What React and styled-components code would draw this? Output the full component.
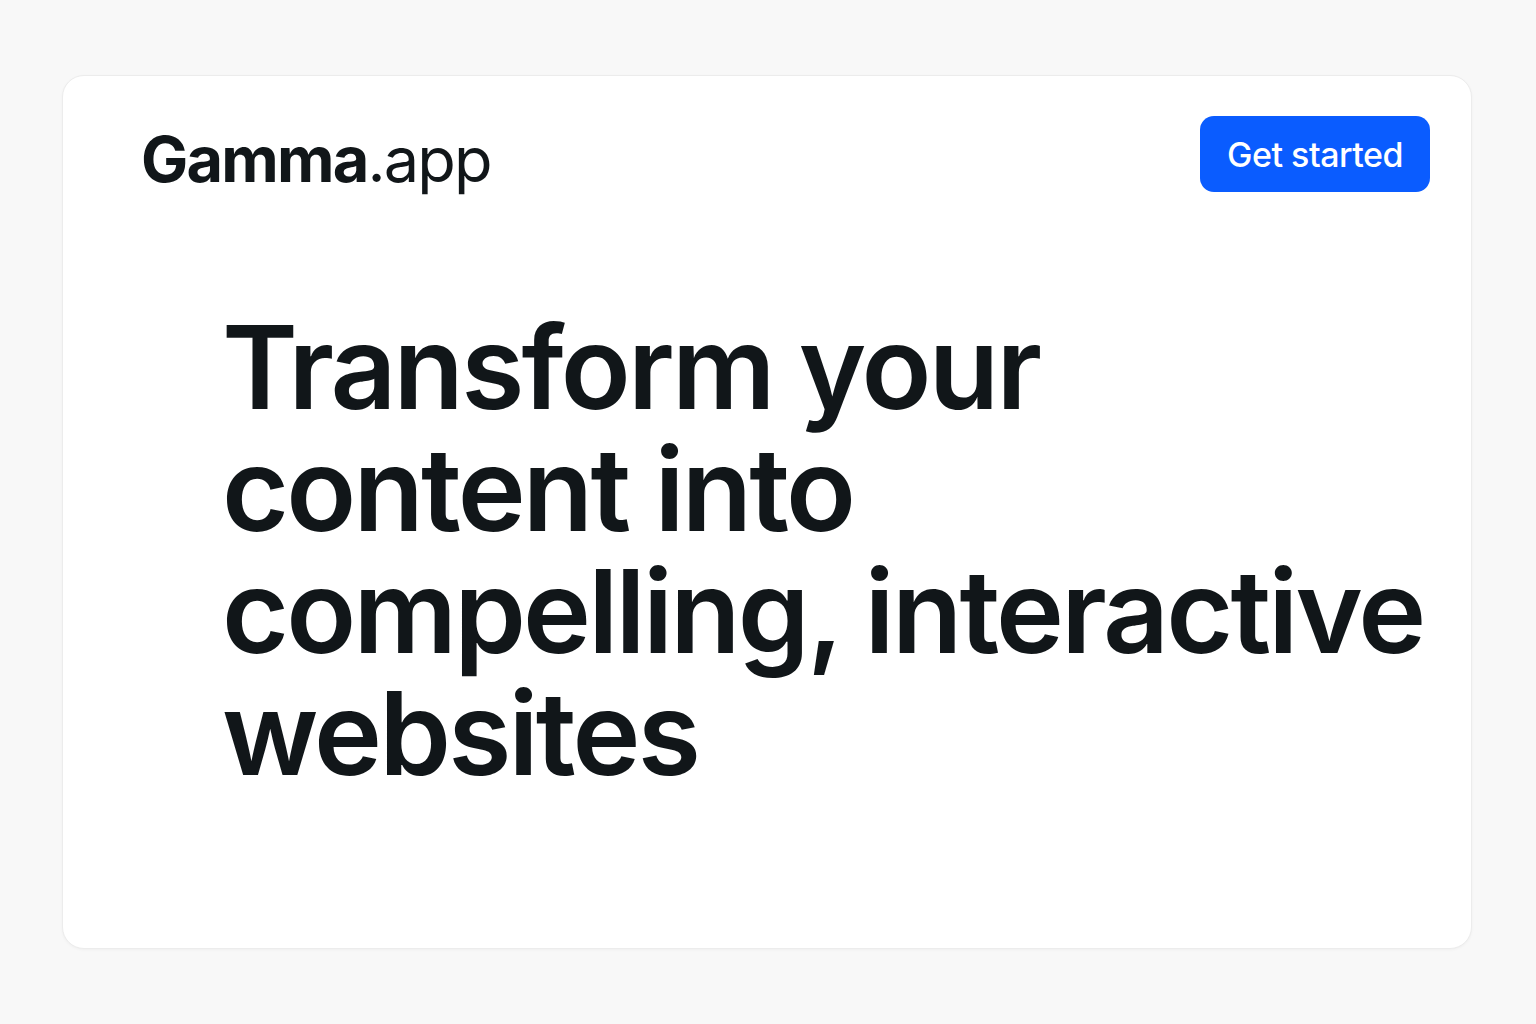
import React from "react";
import styled, { createGlobalStyle } from "styled-components";

const GlobalStyle = createGlobalStyle`
  html, body {
    margin: 0;
    padding: 0;
    background: #f8f8f8;
    font-family: Inter, "Noto Sans", "Liberation Sans", sans-serif;
    color: #111619;
  }
`;

const Page = styled.div`
  width: 1536px;
  height: 1024px;
  padding: 75px 64px 0 62px;
  box-sizing: border-box;
`;

const Card = styled.div`
  width: 1410px;
  height: 874px;
  box-sizing: border-box;
  background: #ffffff;
  border: 1px solid #ececec;
  border-radius: 22px;
  box-shadow: 0 1px 3px rgba(0, 0, 0, 0.04);
  padding: 40px 41px 0 78px;
`;

const Header = styled.header`
  display: flex;
  align-items: center;
  justify-content: space-between;
`;

const Logo = styled.div`
  font-size: 63px;
  letter-spacing: -1.8px;
  line-height: 1;
  padding-top: 10px;
`;

const LogoStrong = styled.span`
  font-weight: 700;
`;

const LogoLight = styled.span`
  font-weight: 400;
`;

const StartButton = styled.button`
  width: 230px;
  height: 76px;
  border: none;
  border-radius: 14px;
  background: #0a5cff;
  color: #ffffff;
  font-family: inherit;
  font-size: 34px;
  font-weight: 500;
  letter-spacing: -0.5px;
`;

const Hero = styled.h1`
  margin: 115px 0 0 81px;
  font-size: 115px;
  font-weight: 600;
  line-height: 122px;
  letter-spacing: -2.8px;
`;

const HeroLine = styled.span`
  display: block;
  white-space: nowrap;
`;

const lines = [
  "Transform your",
  "content into",
  "compelling, interactive",
  "websites",
];

export default function App() {
  return (
    <>
      <GlobalStyle />
      <Page>
        <Card>
          <Header>
            <Logo>
              <LogoStrong>Gamma</LogoStrong>
              <LogoLight>.app</LogoLight>
            </Logo>
            <StartButton>Get started</StartButton>
          </Header>
          <Hero>
            {lines.map((line) => (
              <HeroLine key={line}>{line}</HeroLine>
            ))}
          </Hero>
        </Card>
      </Page>
    </>
  );
}
